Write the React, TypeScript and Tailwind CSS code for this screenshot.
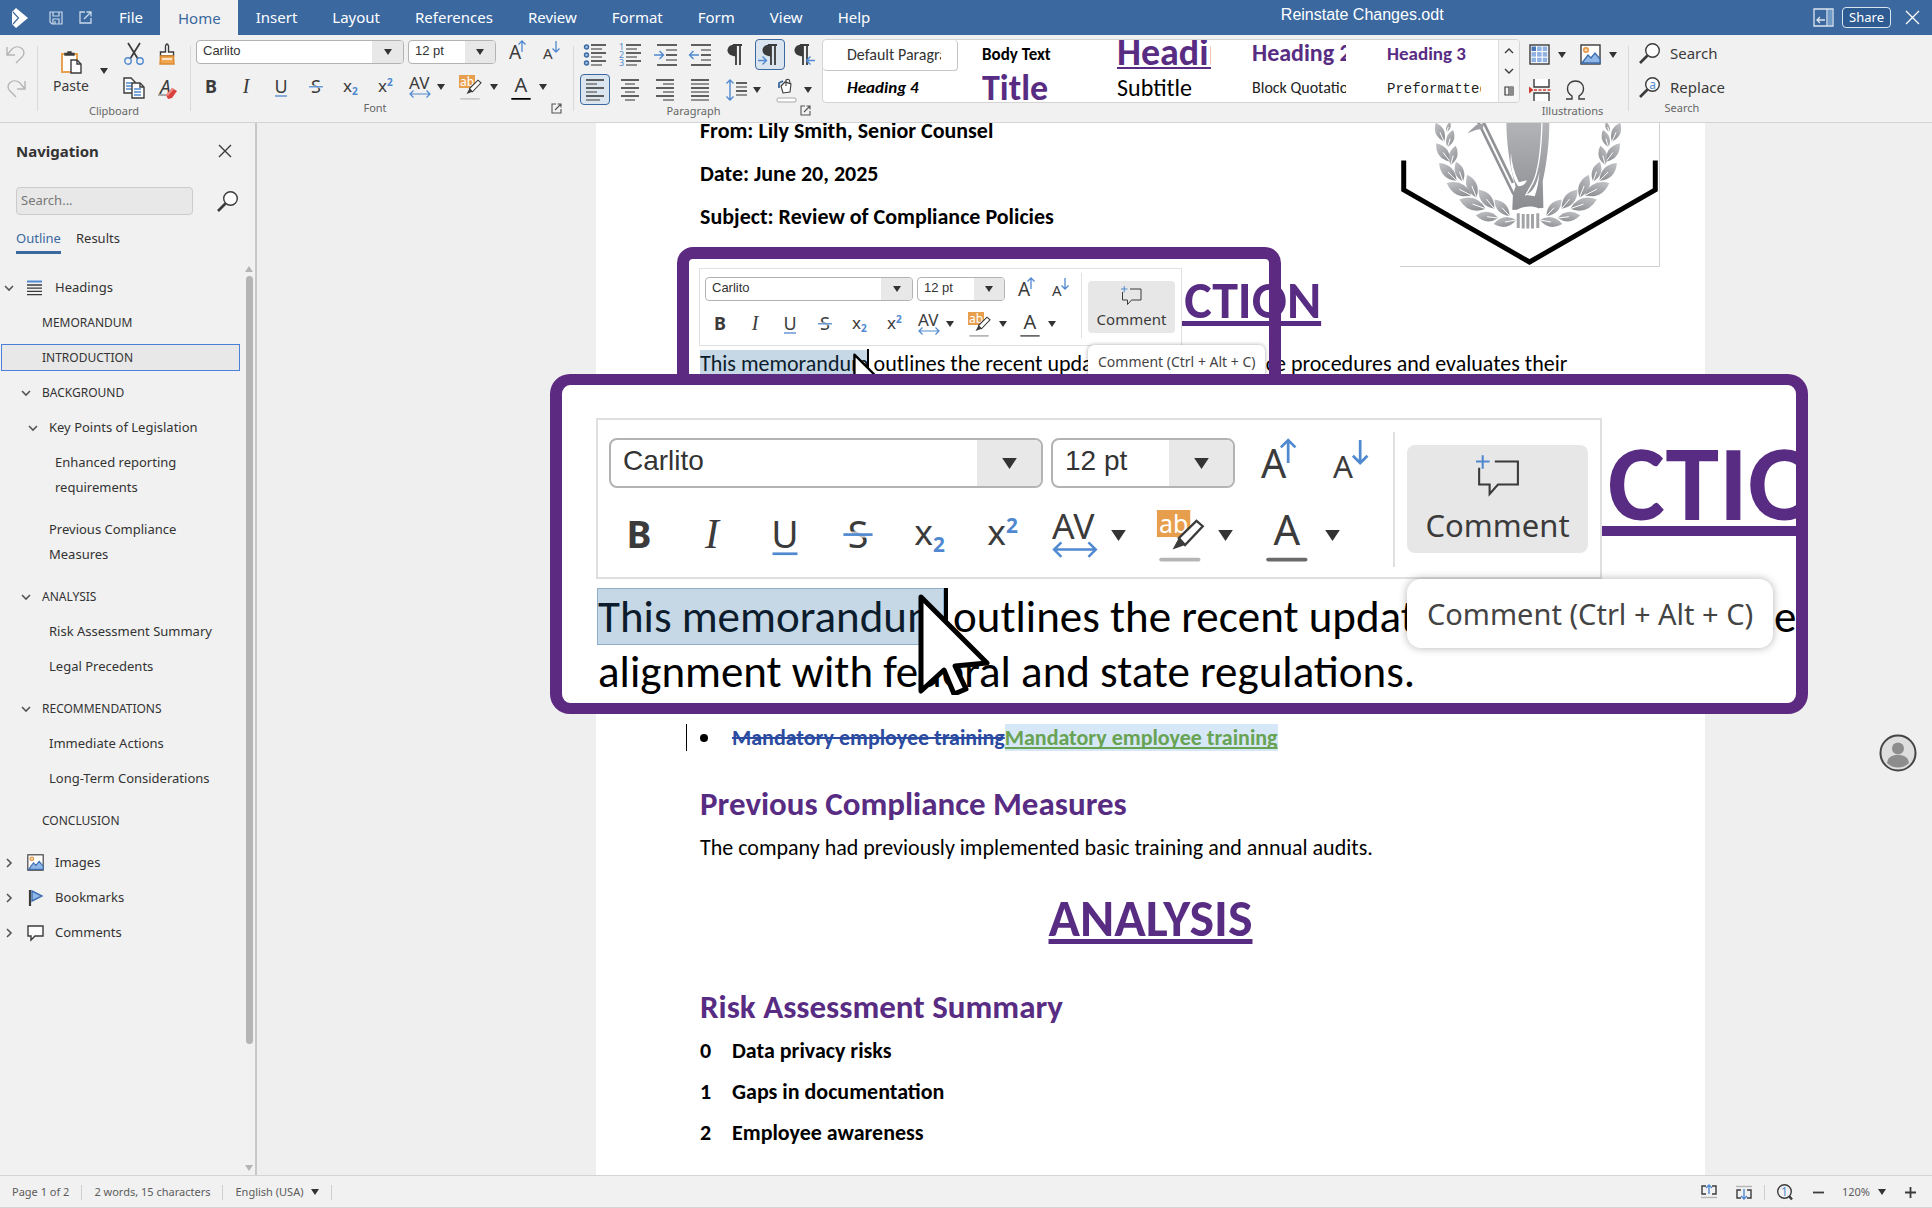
import type { ReactNode } from "react";

const INK = "#3b3b3b";
const BLUE = "#5089cf";

/* ---------- shared pieces ---------- */

function Svg({ w, h = w, box, children, className = "" }: { w: number; h?: number; box?: string; children: ReactNode; className?: string }) {
  return (
    <svg width={w} height={h} viewBox={box ?? `0 0 ${w} ${h}`} fill="none" stroke={INK} strokeWidth="1.4" className={`block shrink-0 overflow-visible ${className}`} aria-hidden="true">
      {children}
    </svg>
  );
}

function Caret({ big = false }: { big?: boolean }) {
  return (
    <svg width={big ? 17 : 8} height={big ? 11 : 6} viewBox="0 0 8 6" className="block shrink-0" aria-hidden="true">
      <path d="M0 0h8L4 6z" fill="#333" />
    </svg>
  );
}

function Chevron({ open }: { open: boolean }) {
  return (
    <Svg w={10}>
      <path d={open ? "M1 3l4 4 4-4" : "M3 1l4 4-4 4"} stroke="#555" strokeWidth="1.6" />
    </Svg>
  );
}

function IconButton({ label, className = "", children }: { label: string; className?: string; children: ReactNode }) {
  return (
    <button type="button" aria-label={label} title={label} className={`flex shrink-0 items-center justify-center ${className}`}>
      {children}
    </button>
  );
}

const uiText = { fontFamily: '"Noto Sans", "Open Sans", sans-serif', stroke: "none", fill: INK };

const glyphs: Record<string, ReactNode> = {
  Bold: <text x="12" y="18" fontSize="18" fontWeight="700" textAnchor="middle" style={uiText}>B</text>,
  Italic: <text x="12" y="18" fontSize="20" fontStyle="italic" textAnchor="middle" style={{ ...uiText, fontFamily: '"Liberation Serif", serif' }}>I</text>,
  Underline: (
    <>
      <text x="12" y="18" fontSize="18" textAnchor="middle" style={uiText}>U</text>
      <path d="M6 21h12" stroke={BLUE} strokeWidth="1.3" />
    </>
  ),
  Strikethrough: (
    <>
      <text x="12" y="18" fontSize="18" textAnchor="middle" style={uiText}>S</text>
      <path d="M5 11.8h14" stroke="#fff" strokeWidth="3" strokeOpacity="0.7" />
      <path d="M5 11.8h14" stroke={BLUE} strokeWidth="1.3" />
    </>
  ),
  Subscript: (
    <>
      <text x="4" y="17" fontSize="17" style={uiText}>x</text>
      <text x="13" y="20" fontSize="10" fontWeight="700" style={{ ...uiText, fill: BLUE }}>2</text>
    </>
  ),
  Superscript: (
    <>
      <text x="4" y="17" fontSize="17" style={uiText}>x</text>
      <text x="13" y="11" fontSize="10" fontWeight="700" style={{ ...uiText, fill: BLUE }}>2</text>
    </>
  ),
};

function SpacingGlyph({ size }: { size: number }) {
  return (
    <Svg w={size} box="0 0 24 24">
      <text x="0" y="14" fontSize="17" style={uiText}>AV</text>
      <path d="M1 19h20M4.5 15.5L1 19l3.5 3.5M17.5 15.5L21 19l-3.5 3.5" stroke={BLUE} strokeWidth="1.2" />
    </Svg>
  );
}

function HighlightGlyph({ size, bar }: { size: number; bar: string }) {
  return (
    <Svg w={size} box="0 0 24 24">
      <rect x="-1" y="0" width="16" height="13" fill="#e89f4d" stroke="none" />
      <text x="0" y="11" fontSize="12" style={{ ...uiText, fill: "#fff" }}>ab</text>
      <path d="M9.500 13.500L18 5.200l3 2.600-8.500 9z" fill="#fff" strokeWidth="1.1" />
      <path d="M9.500 13.500L6.500 19l6-2.200z" fill={INK} stroke="none" />
      <path d="M1 23.800h18" stroke={bar} strokeWidth="1.8" strokeLinecap="round" />
    </Svg>
  );
}

function FontColorGlyph({ size, bar }: { size: number; bar: string }) {
  return (
    <Svg w={size} box="0 0 24 24">
      <text x="10" y="17" fontSize="20" textAnchor="middle" style={uiText}>A</text>
      <path d="M1 23.800h18" stroke={bar} strokeWidth="1.8" strokeLinecap="round" />
    </Svg>
  );
}

function GrowGlyph({ size, up }: { size: number; up: boolean }) {
  return (
    <Svg w={size} box="0 0 24 24">
      <text x="1" y={up ? 19 : 19} fontSize={up ? 19 : 15} style={uiText}>A</text>
      <path d={up ? "M14 12V1M10.500 4.500L14 1l3.500 3.500" : "M14 1v11M10.500 8.500L14 12l3.500-3.500"} stroke={BLUE} strokeWidth="1.3" />
    </Svg>
  );
}

function Combo({ label, value, className, arrowClass, big = false }: { label: string; value: string; className: string; arrowClass: string; big?: boolean }) {
  return (
    <div className={`relative shrink-0 overflow-hidden border-[#b3b3b3] bg-white ${big ? "h-[50px] rounded-lg border-2" : "h-6 rounded border"} ${className}`}>
      <select
        aria-label={label}
        className={`block h-full w-full appearance-none font-['Liberation_Sans',sans-serif] text-[#333] outline-none ${big ? "pb-1 pl-3 text-[28px] leading-[42px]" : "pb-0.5 pl-1.5 text-[13px] leading-5"}`}
        defaultValue={value}
      >
        <option>{value}</option>
      </select>
      <span className={`pointer-events-none absolute inset-y-0 right-0 flex items-center justify-center bg-[#e8e8e8] ${arrowClass}`}>
        <Caret big={big} />
      </span>
    </div>
  );
}

function FontControls({ big = false, highlightBar, colorBar }: { big?: boolean; highlightBar: string; colorBar: string }) {
  const s = big ? 50 : 24;
  const split = big ? "w-[107px]" : "w-[51px]";
  return (
    <div className={big ? "flex flex-col gap-[22px]" : "flex flex-col gap-[11px]"}>
      <div className={big ? "flex gap-2 pl-[7px]" : "flex gap-1 pl-[3px]"}>
        <Combo big={big} label="Font name" value="Carlito" className={big ? "w-[434px]" : "w-[208px]"} arrowClass={big ? "w-16" : "w-[31px]"} />
        <Combo big={big} label="Font size" value="12 pt" className={big ? "w-[184px]" : "w-[88px]"} arrowClass={big ? "w-16" : "w-[30px]"} />
        <div className={big ? "flex gap-[22px] pl-4" : "flex gap-2.5 pl-2"}>
          <IconButton label="Increase font size"><GrowGlyph size={s} up /></IconButton>
          <IconButton label="Decrease font size"><GrowGlyph size={s} up={false} /></IconButton>
        </div>
      </div>
      <div className="flex">
        {Object.keys(glyphs).map((k) => (
          <IconButton key={k} label={k} className={big ? "w-[73px]" : "w-[35px]"}>
            <Svg w={s} box="0 0 24 24">{glyphs[k]}</Svg>
          </IconButton>
        ))}
        <div className={big ? "flex pl-3" : "flex pl-1.5"}>
          <IconButton label="Character spacing" className={`${split} justify-start! ${big ? "gap-2" : "gap-1"}`}><SpacingGlyph size={s} /><Caret big={big} /></IconButton>
          <IconButton label="Highlighting" className={`${split} justify-start! ${big ? "gap-2" : "gap-1.5"}`}><HighlightGlyph size={s} bar={highlightBar} /><Caret big={big} /></IconButton>
          <IconButton label="Font color" className={`${split} justify-start! ${big ? "gap-2" : "gap-1"}`}><FontColorGlyph size={s} bar={colorBar} /><Caret big={big} /></IconButton>
        </div>
      </div>
    </div>
  );
}

/* ---------- title bar ---------- */

const tabs = ["File", "Home", "Insert", "Layout", "References", "Review", "Format", "Form", "View", "Help"];

function TitleBar() {
  return (
    <header className="flex h-[35px] shrink-0 items-stretch bg-[#3a689f] text-[15px] text-white">
      <div className="flex w-[101px] items-center pl-3">
        <Svg w={16} h={20}>
          <path d="M4 0l12 10L4 20 0 16V4z" fill="#fff" stroke="none" />
          <path d="M1 4l5.5 6L1 16" stroke="#3a689f" strokeWidth="1.2" />
        </Svg>
        <IconButton label="Save" className="ml-[21px]">
          <Svg w={14}><path d="M1 1h12v12H3L1 11zM4 1v4h6V1M4 13V8h6v5M6 10v3" stroke="#c9d8ea" strokeWidth="1.2" /></Svg>
        </IconButton>
        <IconButton label="Open in new window" className="ml-4">
          <Svg w={13}><path d="M6 1H1v11h11V7M5 8l7-7M7.5 1H12v4.5" stroke="#c9d8ea" strokeWidth="1.3" /></Svg>
        </IconButton>
      </div>
      <nav className="flex">
        {tabs.map((t) => (
          <a key={t} href={`#${t}`} className={`flex items-center pr-[17px] pl-[18px] ${t === "Home" ? "bg-[#f1f1f1] pt-0.5 text-[#3a689f]" : ""}`}>{t}</a>
        ))}
      </nav>
      <h1 className="min-w-0 flex-1 self-start truncate pt-[3px] pl-6 text-center font-['Liberation_Sans',sans-serif] text-base leading-6">Reinstate Changes.odt</h1>
      <div className="flex items-center gap-2 pr-3">
        <IconButton label="Toggle sidebar">
          <Svg w={21} h={19}>
            <path d="M1 1h19v17H1zM14 1v17M4 12h8M7 9l-3 3 3 3" stroke="#dbe5f1" strokeWidth="1.3" />
            <rect x="15" y="2" width="4" height="15" fill="#6f9ac8" stroke="none" />
          </Svg>
        </IconButton>
        <button type="button" className="h-[21px] rounded border border-[#dbe5f1] bg-[#2e5b92] px-1.5 text-[13px] leading-[17px]">Share</button>
        <IconButton label="Close" className="ml-1.5"><Svg w={15}><path d="M1 1l13 13M14 1L1 14" stroke="#fff" strokeWidth="1.3" /></Svg></IconButton>
      </div>
    </header>
  );
}

/* ---------- ribbon ---------- */

function Divider() {
  return <div className="my-[11px] w-px shrink-0 self-stretch bg-[#dadada]" />;
}

function Launcher() {
  return (
    <IconButton label="More options" className="absolute right-[11px] bottom-0.5">
      <Svg w={11}><path d="M5 1H1v9h9V6M4 7l6-6M6.5 1H10v3.5" stroke="#555" strokeWidth="1.1" /></Svg>
    </IconButton>
  );
}

function GroupLabel({ children, className = "" }: { children: string; className?: string }) {
  return <div className={`text-center text-[11px] leading-4 text-[#666] ${className}`}>{children}</div>;
}

function lines(widths: [number, number][], y0 = 2, step = 5) {
  return widths.map(([a, b], i) => <path key={i} d={`M${a} ${y0 + i * step}H${b}`} stroke={i % 2 ? "#7a7a7a" : INK} strokeWidth="1.6" />);
}

const pilcrow = <path d="M9 1h9M12 1v20M16 1v20" strokeWidth="1.8" />;
const pilcrowBowl = <path d="M12 .2v12C7 12.2 3.5 10 3.5 6.2S7 .2 12 .2z" fill={INK} stroke="none" />;

const paragraphTop: [string, ReactNode, boolean][] = [
  ["Bullets", <>{[1, 9, 17].map((y) => <circle key={y} cx="2.5" cy={y + 2} r="2" stroke="#3a689f" fill="#9dbfe8" />)}{lines([[7, 22], [7, 18], [7, 22], [7, 18], [7, 22], [7, 18]], 1, 4)}</>, false],
  ["Numbering", <>{["1", "2", "3"].map((n, i) => <text key={n} x="0" y={6 + i * 8} fontSize="9" style={{ ...uiText, fill: BLUE }}>{n}</text>)}{lines([[7, 22], [7, 18], [7, 22], [7, 18], [7, 22], [7, 18]], 1, 4)}</>, false],
  ["Increase indent", <>{lines([[3, 23], [12, 23], [12, 23], [12, 23], [3, 23]], 1, 5)}<path d="M0 11h9M5.5 7L9.5 11l-4 4" stroke={BLUE} /></>, false],
  ["Decrease indent", <>{lines([[2, 22], [12, 22], [12, 22], [12, 22], [2, 22]], 1, 5)}<path d="M10 11H1M4.5 7L.5 11l4 4" stroke={BLUE} /></>, false],
  ["Formatting marks", <>{pilcrow}{pilcrowBowl}</>, false],
  ["Left to right", <>{pilcrow}{pilcrowBowl}<path d="M-1 16.5h8M3.5 12.5l4 4-4 4" stroke={BLUE} /></>, true],
  ["Right to left", <><g transform="translate(-3 0)">{pilcrow}{pilcrowBowl}</g><path d="M21 16.5h-8M16.5 12.5l-4 4 4 4" stroke={BLUE} /></>, false],
];

const paragraphBottom: [string, ReactNode, boolean][] = [
  ["Align left", lines([[2, 20], [2, 13], [2, 20], [2, 13], [2, 20], [2, 16]], 1, 4), true],
  ["Center", lines([[2, 20], [6, 16], [2, 20], [6, 16], [2, 20], [6, 16]], 1, 4), false],
  ["Align right", lines([[2, 20], [9, 20], [2, 20], [9, 20], [2, 20], [9, 20]], 1, 4), false],
  ["Justify", lines([[2, 20], [2, 20], [2, 20], [2, 20], [2, 20], [2, 20]], 1, 4), false],
];

function ParaCell({ label, on, children }: { label: string; on: boolean; children: ReactNode }) {
  return (
    <div className="flex w-[35px] justify-center">
      <IconButton label={label} className={`h-[31px] w-[30px] rounded border ${on ? "border-[#3a689f] bg-[#dbe5ef]" : "border-transparent"}`}>
        <Svg w={22}>{children}</Svg>
      </IconButton>
    </div>
  );
}

const styles: [string, string][] = [
  ["Default Paragraph", "leading-[29px] text-base text-[#333]"],
  ["Body Text", "leading-[29px] text-[17px] font-bold text-black"],
  ["Heading 1", "leading-6 text-[38px] font-bold text-[#582c83] underline [text-decoration-skip-ink:none] [text-decoration-thickness:2px] [text-underline-offset:2px]"],
  ["Heading 2", "leading-[26px] text-[24px] font-bold text-[#582c83]"],
  ["Heading 3", "leading-7 text-[19px] font-bold text-[#582c83]"],
  ["Heading 4", "leading-[34px] text-[17px] font-bold italic text-black"],
  ["Title", "leading-[34px] text-[36px] font-bold text-[#582c83]"],
  ["Subtitle", "leading-[34px] text-[24px] text-black"],
  ["Block Quotation", "leading-[34px] text-[16px] text-[#222]"],
  ["Preformatted", "leading-9 font-['Liberation_Mono',monospace] text-[14px] text-[#222]"],
];

function PictureIcon({ size }: { size: number }) {
  return (
    <Svg w={size} box="0 0 21 21">
      <rect x="1" y="1" width="19" height="19" fill="#fdfdfd" />
      <circle cx="6" cy="6" r="2.3" stroke="#e8923c" fill="#f7d7b0" />
      <path d="M2 19l6-8 3 3 4-5 5 6v4z" fill="#8fb8e8" stroke="#3f6fb0" />
    </Svg>
  );
}

function Ribbon() {
  return (
    <div className="flex h-[88px] shrink-0 items-stretch border-b border-[#d4d4d4] bg-[#f1f1f1] text-[#3b3b3b]">
      <div className="flex w-[37px] shrink-0 flex-col gap-4 pt-[10px] pl-1.5">
        <IconButton label="Undo" className="w-5"><Svg w={20} h={18}><path d="M1 2v8h8M1 10L6 4c7-6 16 2 10 8l-6 6" stroke="#b5b5b5" /></Svg></IconButton>
        <IconButton label="Redo" className="w-5"><Svg w={20} h={18}><path d="M19 2v8h-8M19 10l-5-6C7-2-2 6 4 12l6 6" stroke="#b5b5b5" /></Svg></IconButton>
      </div>
      <Divider />
      <div className="flex w-[152px] shrink-0 flex-col justify-between pb-[3px]">
        <div className="flex pt-2 pl-3.5">
          <button type="button" className="flex w-[38px] flex-col items-center gap-0.5 pt-2 text-[14px] leading-5">
            <Svg w={22} h={23}>
              <rect x="2" y="3" width="15" height="18" fill="#fdfdfd" stroke="#e8a24e" strokeWidth="2" />
              <path d="M5 4V2.5h3V1h3v1.5h3V4z" fill={INK} />
              <path d="M11 9h6l4 4v9H11z" fill="#fdfdfd" /><path d="M17 9v4h4" />
            </Svg>
            Paste
          </button>
          <IconButton label="Paste options" className="w-7"><Caret /></IconButton>
          <div className="grid grid-cols-[32px_34px] gap-y-3">
            <IconButton label="Cut"><Svg w={20} h={22}><path d="M4 0l10 16M16 0L6 16" strokeWidth="1.7" /><circle cx="4" cy="18" r="3.2" stroke={BLUE} /><circle cx="16" cy="18" r="3.2" stroke={BLUE} /></Svg></IconButton>
            <IconButton label="Clone formatting"><Svg w={16} h={22}><path d="M6.5 9V3q1.5-4 3 0v6h5v4H1.5V9z" fill="#fff" /><path d="M1.5 13L1 21h14l-.5-8z" fill="#f0a650" stroke="#d98a30" /><path d="M3 16h10" stroke="#fff" /></Svg></IconButton>
            <IconButton label="Copy"><Svg w={22} h={22}><path d="M1 1h7l4 4v11H1z" fill="#fdfdfd" /><path d="M3 6h6M3 9h6M3 12h6" stroke={BLUE} /><path d="M9 6h8l4 4v11H9z" fill="#fdfdfd" /><path d="M17 6v4h4" /><path d="M11 12h7M11 15h7M11 18h7" stroke={BLUE} /></Svg></IconButton>
            <IconButton label="Clear formatting"><Svg w={20} h={22}><text x="3" y="17" fontSize="19" fontStyle="italic" style={uiText}>A</text><path d="M1 18h8" stroke="#888" /><path d="M9 18l6-7 5 3-5 7-4 1z" fill="#d9413c" stroke="none" /><path d="M9 18l6-7 2 1-6 7z" fill="#f08a85" stroke="none" /></Svg></IconButton>
          </div>
        </div>
        <GroupLabel>Clipboard</GroupLabel>
      </div>
      <Divider />
      <div className="relative flex w-[382px] shrink-0 flex-col justify-between pt-[5px] pb-1.5 pl-0.5">
        <FontControls highlightBar="#c9c9c9" colorBar="#000" />
        <GroupLabel className="-mt-2 pr-4">Font</GroupLabel>
        <div className="absolute right-0 bottom-1.5"><Launcher /></div>
      </div>
      <Divider />
      <div className="relative flex w-[248px] shrink-0 flex-col justify-between pt-1 pb-[3px] pl-[3px]">
        <div className="flex flex-col gap-1">
          <div className="flex">{paragraphTop.map(([l, g, on]) => <ParaCell key={l} label={l} on={on}>{g}</ParaCell>)}</div>
          <div className="flex">
            {paragraphBottom.map(([l, g, on]) => <ParaCell key={l} label={l} on={on}>{g}</ParaCell>)}
            <IconButton label="Line spacing" className="w-[51px] gap-1.5">
              <Svg w={22}><path d="M5 1v20M1.5 4.5L5 1l3.5 3.5M1.5 17.5L5 21l3.5-3.5" stroke={BLUE} />{lines([[11, 22], [11, 22], [11, 22], [11, 22]], 4, 4)}</Svg>
              <Caret />
            </IconButton>
            <IconButton label="Background color" className="w-[51px] gap-1.5">
              <Svg w={22}><path d="M5 7l4-4 6 2-1 8-7 1z" fill="#fff" strokeWidth="1.1" /><path d="M10 7V1c3-2 4 0 4 4" strokeWidth="1.1" /><path d="M3 9V4l4-2" stroke="#3a689f" strokeWidth="1.8" /><rect x="1" y="19" width="19" height="4" rx="2" fill="#fff" stroke="#c2c2c2" /></Svg>
              <Caret />
            </IconButton>
          </div>
        </div>
        <GroupLabel className="-mt-3 pr-3">Paragraph</GroupLabel>
        <div className="absolute right-0 bottom-1"><Launcher /></div>
      </div>
      <div className="mt-1 flex h-16 shrink-0 overflow-hidden rounded border border-[#d4d4d4] bg-white">
        <div className="grid grid-cols-[repeat(5,135px)] grid-rows-[31px_31px] font-[Carlito,Lato,sans-serif]">
          {styles.map(([name, cls], i) => (
            <button key={name} type="button" className={`flex h-[31px] items-center overflow-hidden pl-6 text-left ${i === 0 ? "rounded border-r border-b border-[#c4c4c4] pr-4" : "pr-[17px]"}`}>
              <span className={`block h-full w-full overflow-hidden whitespace-nowrap ${cls}`}>{name}</span>
            </button>
          ))}
        </div>
        <div className="flex w-[21px] flex-col items-center justify-between border-l border-[#dedede] bg-[#f5f5f5] py-1.5">
          <IconButton label="Scroll up"><Svg w={10}><path d="M1 7l4-4 4 4" /></Svg></IconButton>
          <IconButton label="Scroll down"><Svg w={10}><path d="M1 3l4 4 4-4" /></Svg></IconButton>
          <IconButton label="Show styles"><Svg w={10}><path d="M1 1h8v8H1zM5 1v8" strokeWidth="1.2" /><rect x="5" y="1" width="4" height="8" fill="#8a8a8a" stroke="none" /></Svg></IconButton>
        </div>
      </div>
      <div className="flex w-[108px] shrink-0 flex-col justify-between pb-[3px] pl-[9px]">
        <div className="flex flex-col gap-3.5 pt-[9px]">
          <div className="flex">
            <IconButton label="Insert table" className="w-[51px] justify-start! gap-2">
              <Svg w={21}>
                <rect x="1" y="1" width="19" height="19" fill="#fdfdfd" />
                {[0, 1, 2].flatMap((r) => [0, 1, 2].map((c) => <rect key={`${r}${c}`} x={2.5 + c * 5.6} y={2.5 + r * 5.6} width="4.5" height="4.5" fill={r + c === 0 ? "#4a76b8" : "#8fb2e2"} stroke="none" />))}
              </Svg>
              <Caret />
            </IconButton>
            <IconButton label="Insert image" className="gap-2"><PictureIcon size={21} /><Caret /></IconButton>
          </div>
          <div className="flex">
            <IconButton label="Page break" className="w-[36px] justify-start!"><Svg w={22}><path d="M5 0v8h15V0M5 22v-8h15v8" fill="#fff" /><path d="M5 11h17" stroke="#cf3b2e" strokeDasharray="3 1.5" /><path d="M0 7.5L4.5 11 0 14.5z" fill="#cf3b2e" stroke="none" /></Svg></IconButton>
            <IconButton label="Symbol"><Svg w={21} h={20}><path d="M1 19h6v-3C3.5 14 2.5 11 2.5 8.5 2.5 4 6 1 10.5 1s8 3 8 7.5c0 2.5-1 5.5-4.5 7.5v3h6" /></Svg></IconButton>
          </div>
        </div>
        <GroupLabel className="pr-3">Illustrations</GroupLabel>
      </div>
      <Divider />
      <div className="flex flex-col justify-between pb-1.5 pl-2.5 text-[15px]">
        <div className="flex flex-col gap-[13px] pt-2">
          <button type="button" className="flex h-[21px] items-center gap-2.5"><Magnifier />Search</button>
          <button type="button" className="flex h-[21px] items-center gap-2.5"><Magnifier letter="a" />Replace</button>
        </div>
        <GroupLabel className="-mt-2">Search</GroupLabel>
      </div>
    </div>
  );
}

function Magnifier({ letter = "" }: { letter?: string }) {
  return (
    <Svg w={21}>
      <circle cx="13.5" cy="7.5" r="6.8" fill="#fdfdfd" />
      <path d="M8.5 12.5L1 20" strokeWidth="2.6" />
      {letter && <text x="13.5" y="11.5" fontSize="12" textAnchor="middle" style={{ ...uiText, fill: BLUE }}>{letter}</text>}
    </Svg>
  );
}

/* ---------- navigation panel ---------- */

type Node = { t: string; kids?: Node[] };

const outline: Node[] = [
  { t: "MEMORANDUM" },
  { t: "INTRODUCTION" },
  {
    t: "BACKGROUND",
    kids: [
      { t: "Key Points of Legislation", kids: [{ t: "Enhanced reporting requirements" }] },
      { t: "Previous Compliance Measures" },
    ],
  },
  { t: "ANALYSIS", kids: [{ t: "Risk Assessment Summary" }, { t: "Legal Precedents" }] },
  { t: "RECOMMENDATIONS", kids: [{ t: "Immediate Actions" }, { t: "Long-Term Considerations" }] },
  { t: "CONCLUSION" },
];

const indents = ["pl-[19px]", "pl-[26px]", "pl-8"];
const widths = ["w-[190px]", "w-[180px]", "w-[138px]"];

function Branch({ nodes, level }: { nodes: Node[]; level: number }) {
  return (
    <ul className="pb-[7px]">
      {nodes.map((n) => {
        const active = n.t === "INTRODUCTION";
        const wraps = n.t === "Previous Compliance Measures";
        return (
          <li key={n.t}>
            <div className="py-1">
              <button type="button" className={`flex w-full items-start border text-left ${indents[level]} ${active ? "border-[#4a80d9] bg-[#e8e8e8]" : "border-transparent"}`}>
                <span className="flex h-[25px] w-[21px] shrink-0 items-center">{n.kids && <Chevron open />}</span>
                <span className={`leading-[25px] ${level === 0 ? "text-[12px]" : "text-[13px]"} ${wraps ? "w-[150px]" : widths[level]}`}>{n.t}</span>
              </button>
            </div>
            {n.kids && <Branch nodes={n.kids} level={level + 1} />}
          </li>
        );
      })}
    </ul>
  );
}

function Root({ label, open = false, icon }: { label: string; open?: boolean; icon: ReactNode }) {
  return (
    <button type="button" className="flex h-[35px] w-full items-center pl-[3px] text-left text-[13px]">
      <Chevron open={open} />
      <span className="flex w-[41px] items-center pl-[13px]">{icon}</span>
      {label}
    </button>
  );
}

function Navigation() {
  return (
    <aside className="flex w-[257px] shrink-0 flex-col border-r-2 border-[#c8c8c8] bg-[#f1f1f1] text-[#333]">
      <div className="flex items-center justify-between pt-4 pr-[23px] pl-4">
        <h2 className="text-[15px] leading-6 font-bold">Navigation</h2>
        <IconButton label="Close navigation"><Svg w={14}><path d="M1 1l12 12M13 1L1 13" /></Svg></IconButton>
      </div>
      <div className="flex items-center justify-between pt-6 pr-[17px] pl-4">
        <input aria-label="Search" placeholder="Search..." className="h-7 w-[177px] rounded border border-[#cbcbcb] bg-[#e8e8e8] px-1 pb-0.5 text-[13px] placeholder:text-[#777]" />
        <IconButton label="Find"><Magnifier /></IconButton>
      </div>
      <div className="flex gap-[15px] pt-[11px] pl-4 text-[13px]">
        <button type="button" className="border-b-3 border-[#3a689f] pb-px leading-6 text-[#3a689f]">Outline</button>
        <button type="button" className="border-b-3 border-transparent pb-px leading-6">Results</button>
      </div>
      <div className="mt-3 flex min-h-0 flex-1">
        <div className="min-w-0 flex-1 pt-1 pr-[3px] pl-px">
          <Root label="Headings" open icon={<Svg w={15}><path d="M0 1.5h15" stroke={BLUE} strokeWidth="2" /><path d="M0 5h15M0 8.2h15M0 11.4h15M0 14.6h15" strokeWidth="1.3" /></Svg>} />
          <Branch nodes={outline} level={0} />
          <Root label="Images" icon={<PictureIcon size={17} />} />
          <Root label="Bookmarks" icon={<Svg w={16}><path d="M3 0v16" strokeWidth="2.2" /><path d="M5 1l10 5-10 5z" fill="#8fb8e8" stroke="#3f6fb0" /></Svg>} />
          <Root label="Comments" icon={<Svg w={17}><path d="M1 2h15v10H8l-4 4v-4H1z" fill="#fdfdfd" /></Svg>} />
        </div>
        <div className="flex w-3 flex-col items-center gap-1 pb-1">
          <Svg w={8} h={6}><path d="M0 6h8L4 0z" fill="#b5b5b5" stroke="none" /></Svg>
          <div className="w-[7px] flex-[88] rounded-full bg-[#b5b5b5]" />
          <div className="flex-[13]" />
          <Svg w={8} h={6}><path d="M0 0h8L4 6z" fill="#b5b5b5" stroke="none" /></Svg>
        </div>
      </div>
    </aside>
  );
}

/* ---------- document ---------- */

const leaves: number[][] = [
  [222, 66, 197, 8], [240, 126, 198, 70], [260, 184, 207, 130], [305, 228, 230, 190], [348, 268, 268, 240], [386, 296, 318, 288], [440, 302, 372, 314],
  [230, 36, 240, 6], [232, 82, 249, 30], [242, 136, 257, 78], [279, 186, 258, 126], [320, 234, 292, 165], [374, 268, 326, 210], [420, 290, 374, 240],
];

function leaf([bx, by, tx, ty]: number[]) {
  const mx = (bx + tx) / 2, my = (by + ty) / 2, dx = (ty - by) * 0.42, dy = (bx - tx) * 0.42;
  return `M${bx} ${by}Q${mx + dx} ${my + dy} ${tx} ${ty}Q${mx - dx} ${my - dy} ${bx} ${by}z`;
}

function Crest() {
  const branch = leaves.map((l, i) => (
    <g key={i}>
      <path d={leaf(l)} fill="url(#steel)" stroke="none" />
      <path d={`M${l[0]} ${l[1]}L${(l[0] + l[2]) / 2} ${(l[1] + l[3]) / 2}`} stroke="#fff" strokeWidth="3" />
    </g>
  ));
  return (
    <svg width="260" height="144" viewBox="90 9 780 432" className="block border-r border-b border-[#d0d0d0]" role="img" aria-label="Company crest">
      <defs>
        <linearGradient id="steel" x1="0" y1="0" x2="0.6" y2="1"><stop offset="0" stopColor="#c4c5c8" /><stop offset="1" stopColor="#919296" /></linearGradient>
        <linearGradient id="body" x1="0" y1="0" x2="0" y2="1"><stop offset="0" stopColor="#b4b5b8" /><stop offset="1" stopColor="#8b8c90" /></linearGradient>
      </defs>
      {branch}
      <g transform="translate(951 0) scale(-1 1)">{branch}</g>
      <path d="M410 0h130c0 70-8 130-20 185l2 80c-8 3-10-1-14 2-20-10-50-6-68 5-4-2-8 2-12-2l2-45 8-25c-18-60-28-130-28-200z" fill="url(#body)" />
      <path d="M518 0c-2 80-8 150-28 190l-22 38" fill="none" stroke="#fff" strokeWidth="4" />
      <path d="M424 100c2 30 10 60 24 88l24-6c-4 12-14 18-26 18-16-20-26-60-22-100z" fill="#fff" />
      <path d="M468 226c22-8 34-30 42-70-2 30-6 50-14 74z" fill="#fff" />
      <path d="M322 0l110 225M338 0l92 190" fill="none" stroke="#929397" strokeWidth="8" />
      <path d="M292 40l28-26 24-4-6 16-20 4z" fill="#a0a1a5" />
      <path d="M446 282v44M461 284v44M475 284v44M489 284v44M505 282v44" stroke="#a3a4a8" strokeWidth="9" />
      <path d="M100 122v89l380 218 380-218v-89" fill="none" stroke="#000" strokeWidth="15" />
    </svg>
  );
}

function CommentIcon({ big }: { big: boolean }) {
  return (
    <Svg w={big ? 44 : 21} h={big ? 42 : 20} box="0 0 21 20">
      <path d="M9 4h11v11h-9.5l-4 4.5V15H1.5V7" strokeWidth="1" />
      <path d="M0 4h6.5M3.2 1v6.5" stroke={BLUE} strokeWidth="1" />
    </Svg>
  );
}

function MiniToolbar({ big = false }: { big?: boolean }) {
  return (
    <div className={`flex border-[#dfdfdf] bg-white text-[#3b3b3b] ${big ? "h-[161px] w-[1006px] border-2 pt-[18px] pl-1" : "h-[78px] w-[483px] border pt-2 pl-0.5"}`}>
      <div className={big ? "w-[791px]" : "w-[379px]"}>
        <FontControls big={big} highlightBar="#b5b5b5" colorBar="#6a6a6a" />
      </div>
      <div className={big ? "-mt-1.5 h-[135px] w-0.5 bg-[#e0e0e0]" : "-mt-1 h-[65px] w-px bg-[#e0e0e0]"} />
      <button type="button" className={`flex flex-col items-center bg-[#e7e7e7] ${big ? "mt-[7px] ml-3 h-[108px] w-[181px] gap-1.5 rounded-lg pt-2 text-[31px] leading-[48px]" : "mt-1 ml-1.5 h-[52px] w-[87px] gap-0.5 rounded pt-1 text-[15px] leading-6"}`}>
        <CommentIcon big={big} />
        Comment
      </button>
    </div>
  );
}

function Pointer({ w, h }: { w: number; h: number }) {
  return (
    <svg width={w} height={h} viewBox="0 0 72 101" className="block" aria-hidden="true">
      <path d="M3 3l66 66-32 3 11 23-12 5-10-24L3 97z" fill="#fff" stroke="#000" strokeWidth="5" strokeLinejoin="round" />
    </svg>
  );
}

function Intro({ selClass }: { selClass: string }) {
  return (
    <>
      <span className={selClass}>This memorandum</span> outlines the recent updates to our compliance procedures and evaluates their alignment with federal and state regulations.
    </>
  );
}

const h1 = "text-center text-[52px] leading-[64px] font-bold text-[#582c83] underline [text-decoration-skip-ink:none] [text-decoration-thickness:5px] [text-underline-offset:3px]";
const h2 = "text-[33px] leading-10 font-bold text-[#582c83]";

function DocumentPage() {
  return (
    <article className="relative -mt-[7px] w-[1109px] shrink-0 bg-white px-[104px] pt-px font-[Carlito,Lato,sans-serif] text-[22px] leading-[27px] text-black">
      <div className="flex flex-col gap-4 font-bold">
        <p>From: Lily Smith, Senior Counsel</p>
        <p>Date: June 20, 2025</p>
        <p>Subject: Review of Compliance Policies</p>
      </div>
      <div className="absolute top-[7px] right-[45px]"><Crest /></div>
      <h2 className={`mt-[38px] ${h1}`}>INTRODUCTION</h2>
      <p className="mt-[18px]"><Intro selClass="bg-[#c6d7e6] text-[#0c1c2c]" /></p>
      <div className="relative mt-[320px] flex font-bold">
        <span className="absolute -left-3.5 h-[27px] w-px bg-black" />
        <span className="flex w-8 items-center"><span className="size-2 rounded-full bg-black" /></span>
        <del className="text-[#2a4b9f] [text-decoration-thickness:2px]">Mandatory employee training</del>
        <ins className="bg-[#d6e7f7] text-[#67a352] [text-decoration-skip-ink:none] [text-decoration-thickness:2px] [text-underline-offset:2px]">Mandatory employee training</ins>
      </div>
      <h3 className={`mt-[33px] ${h2}`}>Previous Compliance Measures</h3>
      <p className="mt-2.5">The company had previously implemented basic training and annual audits.</p>
      <h2 className={`mt-[25px] ${h1}`}>ANALYSIS</h2>
      <h3 className={`mt-[37px] ${h2}`}>Risk Assessment Summary</h3>
      <ol className="mt-2.5 flex flex-col gap-3.5 pb-10 font-bold">
        {["Data privacy risks", "Gaps in documentation", "Employee awareness"].map((t, i) => (
          <li key={t} className="flex"><span className="w-8">{i}</span>{t}</li>
        ))}
      </ol>

      {/* selection toolbar, its tooltip and the frame round them */}
      <div className="absolute top-[152px] left-[103px] font-['Noto_Sans',sans-serif]"><MiniToolbar /></div>
      <div className="absolute top-[233px] left-[271px] h-[27px] w-0.5 bg-black" />
      <div className="absolute top-[237px] left-[257px]"><Pointer w={34} h={48} /></div>
      <div className="absolute top-[229px] left-[492px] rounded-md bg-white px-2.5 font-['Noto_Sans',sans-serif] text-[14px] leading-[34px] text-[#444] shadow-[0_0_4px_rgba(0,0,0,0.35)]">Comment (Ctrl + Alt + C)</div>
      <div className="absolute top-[131px] left-[81px] h-[160px] w-[604px] rounded-2xl border-12 border-[#5d2a82]" />

      {/* enlarged view */}
      <section aria-label="Enlarged view" className="absolute top-[258px] left-[-46px] h-[340px] w-[1258px] overflow-hidden rounded-[20px] border-12 border-y-11 border-[#5d2a82] bg-white">
        <div className="ml-9 w-[1879px] pt-8 text-[45px] leading-[55px]">
          <h2 className="text-center text-[108px] leading-[132px] font-bold text-[#582c83] underline [text-decoration-skip-ink:none] [text-decoration-thickness:10px] [text-underline-offset:6px]">INTRODUCTION</h2>
          <p className="mt-10"><Intro selClass="bg-[#c6d7e6] text-[#0c1c2c] outline outline-[#8fb0cc]" /></p>
        </div>
        <div className="absolute top-[33px] left-[34px] font-['Noto_Sans',sans-serif]"><MiniToolbar big /></div>
        <div className="absolute top-[203px] left-[382px] h-[55px] w-1 bg-black" />
        <div className="absolute top-[209px] left-[356px]"><Pointer w={72} h={101} /></div>
        <div className="absolute top-[194px] left-[845px] rounded-[14px] bg-white px-5 font-['Noto_Sans',sans-serif] text-[29px] leading-[69px] text-[#444] shadow-[0_0_8px_rgba(0,0,0,0.3)]">Comment (Ctrl + Alt + C)</div>
      </section>
    </article>
  );
}

/* ---------- status bar ---------- */

function StatusBar() {
  const sep = <span className="h-[15px] w-px bg-[#cfcfcf]" />;
  return (
    <footer className="flex h-[33px] shrink-0 items-center justify-between border-t border-b border-[#d4d4d4] bg-[#f1f1f1] pt-px text-[11px] text-[#5c5c5c]">
      <div className="flex items-center gap-3 pl-3">
        <span>Page 1 of 2</span>{sep}
        <span>2 words, 15 characters</span>{sep}
        <button type="button" className="flex items-center gap-2">English (USA)<Caret /></button>{sep}
      </div>
      <div className="flex items-center pr-4">
        <IconButton label="Previous page"><Svg w={16}><path d="M5 2H1v8h4M11 2h4v8h-4" /><path d="M8 10V1M5 4l3-3 3 3" stroke={BLUE} /><path d="M0 13.5h16" stroke="#b5b5b5" /></Svg></IconButton>
        <IconButton label="Next page" className="mr-3 ml-[19px]"><Svg w={16}><path d="M5 14H1V6h4M11 14h4V6h-4" /><path d="M8 5v10M5 12l3 3 3-3" stroke={BLUE} /><path d="M0 2.5h16" stroke="#b5b5b5" /></Svg></IconButton>
        {sep}
        <IconButton label="Zoom to page" className="mr-5 ml-3"><Svg w={16}><circle cx="7.5" cy="7.5" r="6.8" /><path d="M12 12l3 3.5" strokeWidth="2.4" /><text x="7.5" y="12" fontSize="12" textAnchor="middle" style={{ ...uiText, fill: BLUE }}>1</text></Svg></IconButton>
        <IconButton label="Zoom out"><Svg w={11}><path d="M0 5.5h11" strokeWidth="1.8" /></Svg></IconButton>
        <button type="button" className="mr-[19px] ml-[18px] flex items-center gap-2">120%<Caret /></button>
        <IconButton label="Zoom in"><Svg w={11}><path d="M0 5.5h11M5.5 0v11" strokeWidth="1.8" /></Svg></IconButton>
      </div>
    </footer>
  );
}

export default function App() {
  return (
    <div className="flex h-screen flex-col overflow-hidden bg-[#efefef] font-['Noto_Sans',sans-serif]">
      <TitleBar />
      <Ribbon />
      <div className="flex min-h-0 flex-1">
        <Navigation />
        <main className="relative flex min-w-0 flex-1 justify-center overflow-hidden bg-[#efefef] pl-[112px]">
          <DocumentPage />
          <button type="button" aria-label="Account" className="absolute top-[611px] right-[15px]">
            <svg width="38" height="38" viewBox="0 0 38 38" className="block" aria-hidden="true">
              <circle cx="19" cy="19" r="17.5" fill="#dedede" stroke="#444" strokeWidth="2" />
              <circle cx="19" cy="14.5" r="6" fill="#8d8d8d" />
              <path d="M8 29c1-7 6-8 11-8s10 1 11 8c-6 6-16 6-22 0z" fill="#8d8d8d" />
            </svg>
          </button>
        </main>
      </div>
      <StatusBar />
    </div>
  );
}
